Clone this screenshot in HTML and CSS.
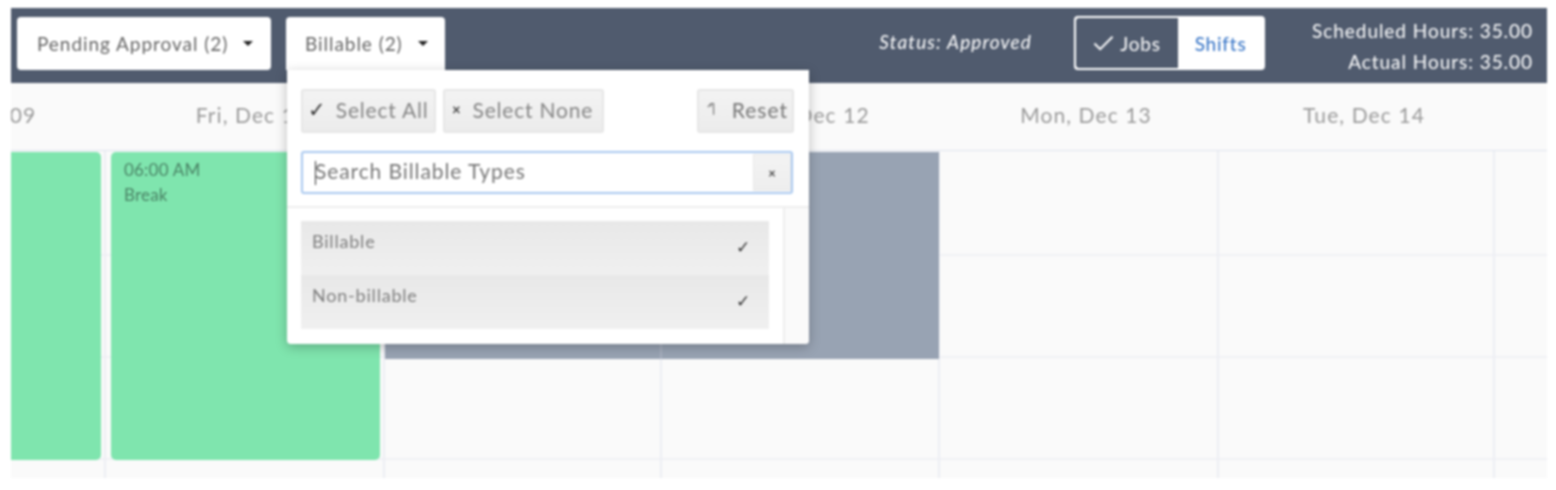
FILE: index.html
```html
<!DOCTYPE html>
<html lang="en">
<head>
<meta charset="utf-8">
<title>Schedule</title>
<link rel="stylesheet" href="styles.css">
</head>
<body>
<main class="app">
  <header class="topbar">
    <button class="filter filter-pending">Pending Approval (2)<span class="caret"></span></button>
    <button class="filter filter-billable">Billable (2)<span class="caret"></span></button>
    <span class="status">Status: Approved</span>
    <div class="toggle">
      <span class="toggle-on"><svg class="tick" viewBox="0 0 22 16"><path d="M1.5 8.5 L7.5 14.5 L20.5 1.5"/></svg>Jobs</span>
      <span class="toggle-off">Shifts</span>
    </div>
    <div class="hours"><span>Scheduled Hours: 35.00</span><span>Actual Hours: 35.00</span></div>
  </header>
  <div class="dates">
    <span class="date">Thu, Dec 09</span>
    <span class="date">Fri, Dec 10</span>
    <span class="date">Sat, Dec 11</span>
    <span class="date">Sun, Dec 12</span>
    <span class="date">Mon, Dec 13</span>
    <span class="date">Tue, Dec 14</span>
  </div>
  <div class="board">
    <div class="col col-a"><i></i><i></i><i></i><i></i></div>
    <div class="col col-b"><i></i><i></i><i></i><i></i></div>
    <div class="col col-c"><i></i><i></i><i></i><i></i></div>
    <div class="col col-d"><i></i><i></i><i></i><i></i></div>
    <div class="col col-e"><i></i><i></i><i></i><i></i></div>
    <div class="col col-f"><i></i><i></i><i></i><i></i></div>
    <div class="col col-z"><i></i><i></i><i></i><i></i></div>
    <div class="event event-left"></div>
    <div class="event event-break"><span>06:00 AM</span><span>Break</span></div>
    <div class="block"></div>
    <div class="block-rule"></div>
  </div>
  <section class="panel">
    <div class="panel-top">
      <div class="actions">
        <button class="act act-all"><span class="act-check">✓</span>Select All</button>
        <button class="act act-none"><span class="act-x">×</span>Select None</button>
        <button class="act act-reset"><svg class="undo" viewBox="0 0 12 18"><path d="M1 6.5 L5.5 1.5 L9 1.5 L9 17 M5.5 1.5 L5.5 6"/></svg>Reset</button>
      </div>
      <div class="search">
        <span class="search-caret"></span><span class="search-text">Search Billable Types</span>
        <span class="search-btn">×</span>
      </div>
    </div>
    <div class="panel-body">
      <ul class="list">
        <li class="item"><span>Billable</span><span class="item-check">✓</span></li>
        <li class="item"><span>Non-billable</span><span class="item-check">✓</span></li>
      </ul>
      <div class="gutter"></div>
    </div>
  </section>
</main>
</body>
</html>
```
FILE: styles.css
```css
* { box-sizing: border-box; }
html, body { margin: 0; background: #fff; }
body {
  padding: 8px 9px 12px 11px;
  font-family: "Lato", "Open Sans", sans-serif;
  height: 490px;
  overflow: hidden;
}
.app {
  position: relative;
  width: 1536px;
  height: 470px;
  background: #fafafa;
  overflow: hidden;
  filter: blur(0.8px);
}
.topbar {
  height: 75px;
  background: #505b6e;
  display: flex;
  align-items: flex-start;
  padding: 9px 14px 0 6px;
  color: #fff;
}
.filter {
  height: 53px;
  border: 0;
  background: #fff;
  border-radius: 4px;
  color: #666;
  font: 19px "Lato", sans-serif;
  letter-spacing: .95px;
  display: flex;
  align-items: center;
  padding: 0 14px 0 20px;
  white-space: nowrap;
}
.filter-pending { width: 254px; }
.filter-billable { width: 159px; margin-left: 15px; padding-left: 19px; border-radius: 4px 4px 0 0; }
.caret {
  width: 0; height: 0;
  margin-left: 15px;
  border: 5px solid transparent;
  border-top-color: #222;
  border-bottom: 0;
}
.status {
  margin-left: auto;
  font-style: italic;
  font-size: 19px;
  letter-spacing: 1.15px;
  line-height: 50px;
}
.toggle {
  width: 191px;
  height: 54px;
  margin: -1px 0 0 42px;
  display: flex;
  background: #fff;
  border-radius: 4px;
  font-size: 19px;
  letter-spacing: .8px;
  overflow: hidden;
  border: 2px solid #fff;
}
.toggle-on {
  width: 102px;
  background: #505b6e;
  display: flex;
  align-items: center;
  justify-content: center;
  gap: 6px;
  border-radius: 3px 0 0 3px;
}
.tick { width: 21px; height: 16px; fill: none; stroke: #fff; stroke-width: 2; }
.toggle-off {
  flex: 1;
  color: #2f6fc4;
  display: flex;
  align-items: center;
  justify-content: center;
}
.hours {
  margin-left: 47px;
  display: flex;
  flex-direction: column;
  align-items: flex-end;
  font-size: 19px;
  letter-spacing: .95px;
  line-height: 31px;
  margin-top: -2px;
}
.dates {
  height: 68px;
  display: flex;
  align-items: center;
  margin-left: -176px;
  padding-bottom: 4px;
  border-bottom: 1px solid #dfe4ee;
  width: 1712px;
}
.date {
  flex: 0 0 278px;
  text-align: center;
  font-size: 21px;
  letter-spacing: 1.1px;
  color: #9a9a9a;
}
.board {
  display: flex;
  height: 327px;
}
.col {
  display: flex;
  flex-direction: column;
  border-right: 2px solid #eceef4;
}
.col-a { flex: 0 0 95px; }
.col-b { flex: 0 0 279px; }
.col-c { flex: 0 0 277px; }
.col-d { flex: 0 0 278px; }
.col-e { flex: 0 0 279px; }
.col-f { flex: 0 0 276px; }
.col-z { flex: 1; border-right: 0; }
.col i { display: block; height: 102px; border-bottom: 2px solid #f0f1f5; }
.col i:first-child { height: 105px; }
.col i:last-child { height: 18px; border: 0; }
.event {
  position: absolute;
  top: 144px;
  height: 308px;
  background: #7fe5ae;
  border-radius: 5px;
}
.event-left { left: 0; width: 90px; border-radius: 0 5px 5px 0; }
.event-break {
  left: 100px;
  width: 269px;
  padding: 5px 13px;
  display: flex;
  flex-direction: column;
  font-size: 17px;
  letter-spacing: .2px;
  line-height: 25px;
  color: #4a8365;
}
.block {
  position: absolute;
  left: 374px;
  top: 144px;
  width: 554px;
  height: 207px;
  background: #98a3b3;
}
.block-rule {
  position: absolute;
  left: 649px;
  top: 144px;
  width: 2px;
  height: 207px;
  background: #a8b0bf;
}
.panel {
  position: absolute;
  left: 276px;
  top: 62px;
  width: 522px;
  height: 274px;
  background: #fff;
  border-radius: 0 0 4px 4px;
  box-shadow: 0 3px 12px rgba(0, 0, 0, .25);
}
.panel-top {
  height: 138px;
  padding: 19px 15px 0 14px;
  border-bottom: 2px solid #eeeeee;
}
.actions { display: flex; gap: 7px; }
.act {
  height: 44px;
  border: 2px solid #e6e6e6;
  border-radius: 3px;
  background: linear-gradient(#f3f3f3, #ececec);
  color: #858585;
  font: 21px "Lato", sans-serif;
  letter-spacing: .8px;
  display: flex;
  align-items: center;
  padding: 0 5px 4px;
  white-space: nowrap;
}
.act-all { width: 135px; }
.act-none { width: 161px; }
.act-reset { width: 97px; margin-left: auto; padding: 0 4px 4px 7px; color: #777; letter-spacing: 1px; }
.act-check { color: #333; margin-right: 9px; }
.act-x { color: #444; margin: 0 11px 0 2px; font-size: 15px; font-weight: 700; }
.undo { width: 12px; height: 18px; margin: 0 16px 0 1px; fill: none; stroke: #6e6e6e; stroke-width: 1.5; }
.search {
  height: 43px;
  margin: 18px 1px 0 0;
  border: 2px solid #a9c8ef;
  border-radius: 3px;
  display: flex;
  align-items: center;
  padding-left: 12px;
  font-size: 21px;
  letter-spacing: .9px;
  color: #777;
}
.search-caret { width: 1px; height: 24px; background: #333; margin-right: -1px; }
.search-text { flex: 1; padding-bottom: 4px; }
.search-btn {
  width: 38px;
  height: 37px;
  background: linear-gradient(#f3f3f3, #eeeeee);
  border: 1px solid #e8e8e8;
  color: #444;
  font-size: 13px;
  font-weight: 700;
  letter-spacing: 0;
  display: flex;
  align-items: center;
  justify-content: center;
}
.panel-body { display: flex; height: 136px; }
.list {
  list-style: none;
  width: 468px;
  margin: 13px 0 0 14px;
  padding: 0;
  height: 108px;
}
.item {
  height: 54px;
  background: linear-gradient(#e8e8e8, #f0f0f0);
  display: flex;
  justify-content: space-between;
  padding: 9px 19px 0 11px;
  color: #7d7d7d;
  font-size: 18px;
  letter-spacing: .8px;
}
.item-check { color: #333; font-size: 17px; margin-top: 6px; letter-spacing: 0; }
.gutter {
  margin-left: 14px;
  flex: 1;
  background: #fafafa;
  border-left: 2px solid #eeeeee;
  border-radius: 0 0 4px 0;
}
```
